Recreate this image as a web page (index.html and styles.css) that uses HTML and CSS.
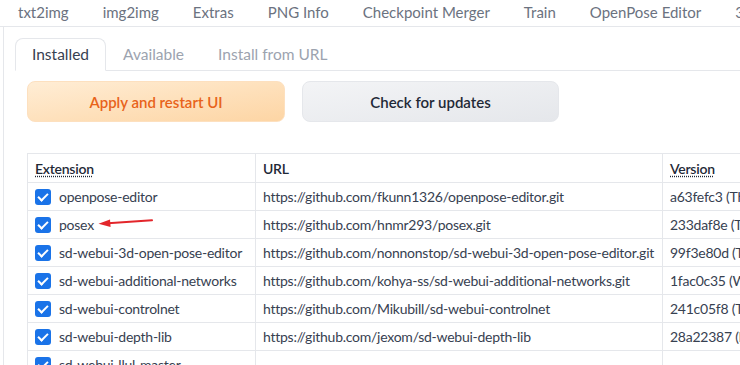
FILE: index.html
```html
<!DOCTYPE html>
<html lang="en">
<head>
  <meta charset="UTF-8">
  <title>Extensions</title>
  <link rel="stylesheet" href="styles.css">
</head>
<body>
  <nav class="top-tabs">
    <span>txt2img</span>
    <span>img2img</span>
    <span>Extras</span>
    <span>PNG Info</span>
    <span>Checkpoint Merger</span>
    <span>Train</span>
    <span>OpenPose Editor</span>
    <span>3D Openpose</span>
  </nav>

  <div class="panel">
    <div class="sub-tabs">
      <span class="sub-tab selected">Installed</span>
      <span class="sub-tab">Available</span>
      <span class="sub-tab">Install from URL</span>
    </div>

    <div class="tab-body">
      <div class="actions">
        <button class="btn btn-primary">Apply and restart UI</button>
        <button class="btn btn-secondary">Check for updates</button>
      </div>

      <table class="ext-table">
        <thead>
          <tr>
            <th class="col-name"><abbr>Extension</abbr></th>
            <th class="col-url">URL</th>
            <th class="col-ver"><abbr>Version</abbr></th>
          </tr>
        </thead>
        <tbody>
          <tr>
            <td><label class="ext"><span class="check"></span>openpose-editor</label></td>
            <td>https://github.com/fkunn1326/openpose-editor.git</td>
            <td>a63fefc3 (Thu Mar 30 08:12:45 2023)</td>
          </tr>
          <tr>
            <td class="has-note">
              <label class="ext"><span class="check"></span>posex</label>
              <svg class="note-arrow" width="56" height="10" viewBox="0 0 56 10">
                <path d="M54 2.2 L10 5.2" stroke="#e3262b" stroke-width="2" stroke-linecap="round" fill="none"/>
                <path d="M0.5 5.8 L12 1.6 L12.6 9 Z" fill="#e3262b"/>
              </svg>
            </td>
            <td>https://github.com/hnmr293/posex.git</td>
            <td>233daf8e (Tue Mar 28 11:20:03 2023)</td>
          </tr>
          <tr>
            <td><label class="ext"><span class="check"></span>sd-webui-3d-open-pose-editor</label></td>
            <td>https://github.com/nonnonstop/sd-webui-3d-open-pose-editor.git</td>
            <td>99f3e80d (Tue Mar 28 20:41:10 2023)</td>
          </tr>
          <tr>
            <td><label class="ext"><span class="check"></span>sd-webui-additional-networks</label></td>
            <td>https://github.com/kohya-ss/sd-webui-additional-networks.git</td>
            <td>1fac0c35 (Wed Mar 22 09:31:27 2023)</td>
          </tr>
          <tr>
            <td><label class="ext"><span class="check"></span>sd-webui-controlnet</label></td>
            <td>https://github.com/Mikubill/sd-webui-controlnet</td>
            <td>241c05f8 (Thu Mar 30 02:07:59 2023)</td>
          </tr>
          <tr>
            <td><label class="ext"><span class="check"></span>sd-webui-depth-lib</label></td>
            <td>https://github.com/jexom/sd-webui-depth-lib</td>
            <td>28a22387 (Mon Mar 20 15:02:11 2023)</td>
          </tr>
          <tr>
            <td><label class="ext"><span class="check"></span>sd-webui-llul-master</label></td>
            <td></td>
            <td></td>
          </tr>
        </tbody>
      </table>
    </div>
  </div>
</body>
</html>
```

FILE: styles.css
```css
body {
  margin: 0;
  font-family: "Lato", "Noto Sans", sans-serif;
  color: #374151;
  background: #ffffff;
  width: 740px;
  height: 365px;
  overflow: hidden;
}

.top-tabs {
  display: flex;
  gap: 34px;
  height: 27px;
  padding-left: 18px;
  border-bottom: 1px solid #e5e7eb;
  font-size: 15px;
  color: #6b7280;
  white-space: nowrap;
  box-sizing: border-box;
  line-height: 24px;
}

.panel {
  margin-left: 3px;
  border-left: 1px solid #e5e7eb;
  padding: 10px 0 0 11px;
}

.sub-tabs {
  display: flex;
  align-items: flex-end;
  height: 33px;
  border-bottom: 1px solid #e5e7eb;
  font-size: 15.5px;
}

.sub-tab {
  padding: 0 16px;
  line-height: 31px;
  color: #9ca3af;
  margin-bottom: -1px;
  border: 1px solid transparent;
}

.sub-tab.selected {
  color: #374151;
  border-color: #e5e7eb;
  border-bottom-color: #ffffff;
  border-radius: 8px 8px 0 0;
  background: #ffffff;
}

.tab-body {
  padding: 10px 0 0 12px;
}

.actions {
  display: flex;
  gap: 17px;
}

.btn {
  height: 41px;
  border-radius: 8px;
  font-family: inherit;
  font-size: 15px;
  font-weight: 600;
  cursor: pointer;
}

.btn-primary {
  width: 258px;
  border: 1px solid #fde0bf;
  background: linear-gradient(to bottom right, #ffedd5, #fdd5a4);
  color: #e8631a;
}

.btn-secondary {
  width: 257px;
  border: 1px solid #e5e7eb;
  background: linear-gradient(to bottom right, #f3f4f6, #e5e7eb);
  color: #1f2937;
}

.ext-table {
  margin-top: 31px;
  border-collapse: collapse;
  font-size: 14px;
  letter-spacing: -0.25px;
  white-space: nowrap;
  table-layout: fixed;
  width: 900px;
}

.ext-table th,
.ext-table td {
  border: 1px solid #e5e7eb;
  padding: 0 7px;
  text-align: left;
  height: 27px;
  overflow: hidden;
}

.ext-table th {
  height: 28px;
  font-weight: 600;
  color: #1f2937;
}

.col-name { width: 213px; }
.col-url { width: 392px; }

abbr {
  text-decoration: underline dotted;
  text-underline-offset: 2px;
}

.ext {
  display: flex;
  align-items: center;
  gap: 8px;
}

.check {
  position: relative;
  width: 16px;
  height: 16px;
  border-radius: 3px;
  background: #1a73e8;
  flex: none;
}

.check::after {
  content: "";
  position: absolute;
  left: 5px;
  top: 2px;
  width: 4px;
  height: 8px;
  border: solid #ffffff;
  border-width: 0 2px 2px 0;
  transform: rotate(45deg);
}

.has-note {
  position: relative;
}

.note-arrow {
  position: absolute;
  left: 70px;
  top: 7px;
}
```
